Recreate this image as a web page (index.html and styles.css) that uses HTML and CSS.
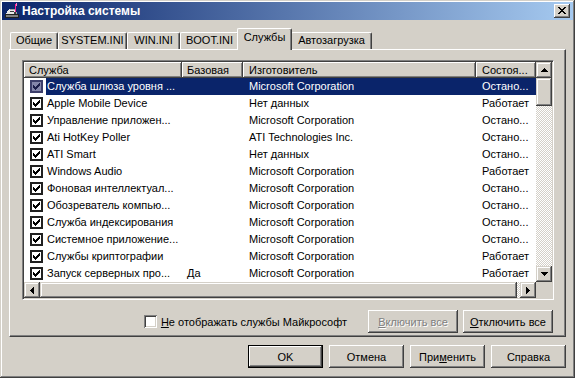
FILE: index.html
```html
<!DOCTYPE html>
<html lang="ru">
<head>
<meta charset="utf-8">
<title>Настройка системы</title>
<link rel="stylesheet" href="styles.css">
</head>
<body>
<div class="window">
  <div class="titlebar">
    <svg class="app-icon" width="16" height="16" viewBox="0 0 16 16" shape-rendering="crispEdges">
      <rect x="1" y="11" width="14" height="4" fill="#202020"/>
      <rect x="2" y="12" width="12" height="2" fill="#808080"/>
      <path d="M2 11 L5 6 H12 L13 11 Z" fill="#e8e8e8"/>
      <path d="M5 6 H12 L13 11 H12 L11 7 H6 Z" fill="#a0a0a0"/>
      <rect x="6" y="8" width="4" height="1" fill="#404040"/>
      <rect x="11" y="1" width="1" height="9" fill="#ff2090"/>
      <rect x="12" y="0" width="1" height="3" fill="#ff80c0"/>
      <rect x="10" y="9" width="2" height="2" fill="#404040"/>
    </svg>
    <span class="title">Настройка системы</span>
    <button class="close-btn" type="button" aria-label="Закрыть">
      <svg width="8" height="7" viewBox="0 0 8 7" shape-rendering="crispEdges"><path d="M0 0h2v1h1v1h2v-1h1v-1h2v1h-1v1h-1v1h-1v1h1v1h1v1h1v1h-2v-1h-1v-1h-2v1h-1v1h-2v-1h1v-1h1v-1h1v-1h-1v-1h-1v-1h-1z" fill="#000"/></svg>
    </button>
  </div>

  <div class="content">
    <div class="tabs">
      <div class="tab tab-general">Общие</div>
      <div class="tab tab-system">SYSTEM.INI</div>
      <div class="tab tab-win">WIN.INI</div>
      <div class="tab tab-boot">BOOT.INI</div>
      <div class="tab tab-services active">Службы</div>
      <div class="tab tab-startup">Автозагрузка</div>
    </div>

    <div class="panel">
      <div class="list">
        <div class="list-main">
          <div class="header">
            <div class="hcell c-name">Служба</div>
            <div class="hcell c-base">Базовая</div>
            <div class="hcell c-vendor">Изготовитель</div>
            <div class="hcell c-state">Состоя...</div>
          </div>
          <div class="rows">
            <div class="row selected"><span class="chk-cell"><span class="chk"><svg width="9" height="9" viewBox="0 0 9 9" shape-rendering="crispEdges"><path d="M1 3v3l2 2l5-5v-3l-5 5z"/></svg></span></span><span class="cell c-text">Служба шлюза уровня ...</span><span class="cell c-base"></span><span class="cell c-vendor">Microsoft Corporation</span><span class="cell c-state">Остано...</span></div>
            <div class="row"><span class="chk-cell"><span class="chk"><svg width="9" height="9" viewBox="0 0 9 9" shape-rendering="crispEdges"><path d="M1 3v3l2 2l5-5v-3l-5 5z"/></svg></span></span><span class="cell c-text">Apple Mobile Device</span><span class="cell c-base"></span><span class="cell c-vendor">Нет данных</span><span class="cell c-state">Работает</span></div>
            <div class="row"><span class="chk-cell"><span class="chk"><svg width="9" height="9" viewBox="0 0 9 9" shape-rendering="crispEdges"><path d="M1 3v3l2 2l5-5v-3l-5 5z"/></svg></span></span><span class="cell c-text">Управление приложен...</span><span class="cell c-base"></span><span class="cell c-vendor">Microsoft Corporation</span><span class="cell c-state">Остано...</span></div>
            <div class="row"><span class="chk-cell"><span class="chk"><svg width="9" height="9" viewBox="0 0 9 9" shape-rendering="crispEdges"><path d="M1 3v3l2 2l5-5v-3l-5 5z"/></svg></span></span><span class="cell c-text">Ati HotKey Poller</span><span class="cell c-base"></span><span class="cell c-vendor">ATI Technologies Inc.</span><span class="cell c-state">Остано...</span></div>
            <div class="row"><span class="chk-cell"><span class="chk"><svg width="9" height="9" viewBox="0 0 9 9" shape-rendering="crispEdges"><path d="M1 3v3l2 2l5-5v-3l-5 5z"/></svg></span></span><span class="cell c-text">ATI Smart</span><span class="cell c-base"></span><span class="cell c-vendor">Нет данных</span><span class="cell c-state">Остано...</span></div>
            <div class="row"><span class="chk-cell"><span class="chk"><svg width="9" height="9" viewBox="0 0 9 9" shape-rendering="crispEdges"><path d="M1 3v3l2 2l5-5v-3l-5 5z"/></svg></span></span><span class="cell c-text">Windows Audio</span><span class="cell c-base"></span><span class="cell c-vendor">Microsoft Corporation</span><span class="cell c-state">Работает</span></div>
            <div class="row"><span class="chk-cell"><span class="chk"><svg width="9" height="9" viewBox="0 0 9 9" shape-rendering="crispEdges"><path d="M1 3v3l2 2l5-5v-3l-5 5z"/></svg></span></span><span class="cell c-text">Фоновая интеллектуал...</span><span class="cell c-base"></span><span class="cell c-vendor">Microsoft Corporation</span><span class="cell c-state">Остано...</span></div>
            <div class="row"><span class="chk-cell"><span class="chk"><svg width="9" height="9" viewBox="0 0 9 9" shape-rendering="crispEdges"><path d="M1 3v3l2 2l5-5v-3l-5 5z"/></svg></span></span><span class="cell c-text">Обозреватель компью...</span><span class="cell c-base"></span><span class="cell c-vendor">Microsoft Corporation</span><span class="cell c-state">Остано...</span></div>
            <div class="row"><span class="chk-cell"><span class="chk"><svg width="9" height="9" viewBox="0 0 9 9" shape-rendering="crispEdges"><path d="M1 3v3l2 2l5-5v-3l-5 5z"/></svg></span></span><span class="cell c-text">Служба индексирования</span><span class="cell c-base"></span><span class="cell c-vendor">Microsoft Corporation</span><span class="cell c-state">Остано...</span></div>
            <div class="row"><span class="chk-cell"><span class="chk"><svg width="9" height="9" viewBox="0 0 9 9" shape-rendering="crispEdges"><path d="M1 3v3l2 2l5-5v-3l-5 5z"/></svg></span></span><span class="cell c-text">Системное приложение...</span><span class="cell c-base"></span><span class="cell c-vendor">Microsoft Corporation</span><span class="cell c-state">Остано...</span></div>
            <div class="row"><span class="chk-cell"><span class="chk"><svg width="9" height="9" viewBox="0 0 9 9" shape-rendering="crispEdges"><path d="M1 3v3l2 2l5-5v-3l-5 5z"/></svg></span></span><span class="cell c-text">Службы криптографии</span><span class="cell c-base"></span><span class="cell c-vendor">Microsoft Corporation</span><span class="cell c-state">Работает</span></div>
            <div class="row"><span class="chk-cell"><span class="chk"><svg width="9" height="9" viewBox="0 0 9 9" shape-rendering="crispEdges"><path d="M1 3v3l2 2l5-5v-3l-5 5z"/></svg></span></span><span class="cell c-text">Запуск серверных про...</span><span class="cell c-base">Да</span><span class="cell c-vendor">Microsoft Corporation</span><span class="cell c-state">Работает</span></div>
          </div>
        </div>
        <div class="vscroll">
          <div class="sb-btn"><svg width="7" height="4" viewBox="0 0 7 4" shape-rendering="crispEdges"><path d="M3 0h1v1h1v1h1v1h1v1H0V3h1V2h1V1h1z"/></svg></div>
          <div class="thumb thumb-v"></div>
          <div class="track"></div>
          <div class="sb-btn"><svg width="7" height="4" viewBox="0 0 7 4" shape-rendering="crispEdges"><path d="M0 0h7v1h-1v1h-1v1h-1v1h-1v-1h-1v-1h-1v-1h-1z"/></svg></div>
        </div>
        <div class="hscroll">
          <div class="sb-btn"><svg width="4" height="7" viewBox="0 0 4 7" shape-rendering="crispEdges"><path d="M3 0h1v7h-1v-1h-1v-1h-1v-1h-1v-1h1v-1h1v-1h1z"/></svg></div>
          <div class="thumb thumb-h"></div>
          <div class="track"></div>
          <div class="sb-btn"><svg width="4" height="7" viewBox="0 0 4 7" shape-rendering="crispEdges"><path d="M0 0h1v1h1v1h1v1h1v1h-1v1h-1v1h-1v1h-1z"/></svg></div>
        </div>
        <div class="corner"></div>
      </div>

      <div class="panel-actions">
        <label class="option"><span class="box"></span><span><u>Н</u>е отображать службы Майкрософт</span></label>
        <button class="btn btn-wide" type="button" disabled><u>В</u>ключить все</button>
        <button class="btn btn-wide" type="button"><u>О</u>тключить все</button>
      </div>
    </div>

    <div class="dialog-buttons">
      <button class="btn btn-dialog default" type="button">OK</button>
      <button class="btn btn-dialog" type="button">Отмена</button>
      <button class="btn btn-dialog" type="button">При<u>м</u>енить</button>
      <button class="btn btn-dialog" type="button">Справка</button>
    </div>
  </div>
</div>
</body>
</html>
```

FILE: styles.css
```css
* { box-sizing: border-box; }

html, body {
  margin: 0;
  padding: 0;
}

body {
  width: 575px;
  height: 378px;
  overflow: hidden;
  background: #d4d0c8;
  font-family: "Liberation Sans", Arial, sans-serif;
  font-size: 11px;
  color: #000;
}

.window {
  width: 575px;
  height: 378px;
  padding: 2px;
  background: #d4d0c8;
  box-shadow: inset -1px -1px #404040, inset 1px 1px #d4d0c8, inset -2px -2px #808080, inset 2px 2px #ffffff;
  display: flex;
  flex-direction: column;
}

/* Title bar */
.titlebar {
  height: 18px;
  flex: none;
  display: flex;
  align-items: center;
  padding: 0 3px 0 2px;
  background: linear-gradient(to right, #0a246a, #a6caf0);
}

.app-icon { flex: none; display: block; }

.title {
  flex: 1;
  margin-left: 2px;
  color: #fff;
  font-weight: bold;
  font-size: 12px;
  white-space: nowrap;
}

.close-btn {
  width: 16px;
  height: 14px;
  padding: 0;
  border: 0;
  background: #d4d0c8;
  display: flex;
  align-items: center;
  justify-content: center;
  box-shadow: inset -1px -1px #404040, inset 1px 1px #ffffff, inset -2px -2px #808080, inset 2px 2px #d4d0c8;
}
.close-btn svg { display: block; margin: 0 1px 1px 0; }

/* Content */
.content {
  flex: 1;
  display: flex;
  flex-direction: column;
  padding: 8px 7px 0 7px;
}

.tabs {
  height: 21px;
  flex: none;
  display: flex;
  align-items: flex-end;
  padding-left: 1px;
  position: relative;
  z-index: 1;
}

.tab {
  flex: none;
  height: 17px;
  line-height: 15px;
  text-align: center;
  white-space: nowrap;
  background: #d4d0c8;
  border-left: 1px solid #ffffff;
  border-top: 1px solid #ffffff;
  border-right: 1px solid #404040;
  border-radius: 2px 2px 0 0;
  box-shadow: inset -1px 0 #808080;
}

.tab-general { width: 48px; }
.tab-system { width: 69px; }
.tab-win { width: 53px; }
.tab-boot { width: 59px; }
.tab-services { width: 52px; }
.tab-startup { width: 81px; }

.tab.active {
  width: 55px;
  height: 22px;
  margin: 0 -1px -1px -2px;
  line-height: 17px;
  position: relative;
  z-index: 2;
}

.panel {
  flex: none;
  padding: 10px 11px 3px 12px;
  border-top: 1px solid #ffffff;
  border-left: 1px solid #ffffff;
  border-right: 1px solid #404040;
  border-bottom: 1px solid #404040;
  box-shadow: inset -1px -1px #808080;
}

/* List view */
.list {
  width: 532px;
  height: 240px;
  display: grid;
  grid-template-columns: 512px 16px;
  grid-template-rows: 220px 16px;
  background: #fff;
  border-top: 1px solid #808080;
  border-left: 1px solid #808080;
  border-right: 1px solid #ffffff;
  border-bottom: 1px solid #ffffff;
  box-shadow: inset 1px 1px #404040, inset -1px -1px #d4d0c8;
  padding: 1px;
}

.list-main { overflow: hidden; }

.header {
  display: flex;
  height: 16px;
}

.hcell {
  flex: none;
  height: 16px;
  line-height: 16px;
  padding: 0 5px;
  white-space: nowrap;
  overflow: hidden;
  background: #d4d0c8;
  box-shadow: inset -1px -1px #404040, inset 1px 1px #ffffff, inset -2px -2px #808080;
}

.hcell.c-name { width: 158px; }
.c-base { width: 61px; }
.c-vendor { width: 233px; }
.c-state { width: 60px; }
.hcell.c-vendor { padding-left: 6px; }
.hcell.c-state { padding-left: 6px; }

.row {
  display: flex;
  height: 17px;
  line-height: 17px;
}

.chk-cell {
  flex: none;
  width: 22px;
  display: flex;
  align-items: center;
  padding-left: 6px;
}

.chk {
  width: 13px;
  height: 13px;
  border: 2px solid #202020;
  background: #fff;
  display: flex;
  align-items: center;
  justify-content: center;
}
.chk svg { display: block; fill: #000; }

.cell {
  flex: none;
  height: 17px;
  padding: 0 6px;
  white-space: nowrap;
  overflow: hidden;
}
.cell.c-text { width: 136px; padding-left: 1px; }
.cell.c-base { padding-left: 5px; }

.row.selected .cell {
  background: #0a246a;
  color: #fff;
}
.row.selected .chk {
  background: #8486aa;
  border-color: #3c3e6a;
}
.row.selected .chk svg { fill: #1c1e4a; }

/* Scrollbars */
.vscroll {
  display: flex;
  flex-direction: column;
}

.hscroll {
  display: flex;
}

.sb-btn {
  flex: none;
  width: 16px;
  height: 16px;
  background: #d4d0c8;
  display: flex;
  align-items: center;
  justify-content: center;
  box-shadow: inset -1px -1px #404040, inset 1px 1px #d4d0c8, inset -2px -2px #808080, inset 2px 2px #ffffff;
}
.sb-btn svg { display: block; fill: #000; }

.thumb {
  flex: none;
  background: #d4d0c8;
  box-shadow: inset -1px -1px #404040, inset 1px 1px #d4d0c8, inset -2px -2px #808080, inset 2px 2px #ffffff;
}
.thumb-v { height: 28px; }
.thumb-h { width: 477px; }

.track {
  flex: 1;
  background: repeating-conic-gradient(#d4d0c8 0% 25%, #ffffff 0% 50%) 0 0 / 2px 2px;
}

.corner { background: #d4d0c8; }

/* Panel actions */
.panel-actions {
  margin-top: 10px;
  height: 23px;
  display: flex;
  align-items: center;
  justify-content: flex-end;
  padding-right: 1px;
  gap: 5px;
}

.option {
  display: flex;
  align-items: center;
  gap: 4px;
  margin-right: 16px;
  white-space: nowrap;
}

.box {
  width: 13px;
  height: 13px;
  background: #fff;
  box-shadow: inset 1px 1px #808080, inset -1px -1px #ffffff, inset 2px 2px #404040, inset -2px -2px #d4d0c8;
}

.btn {
  height: 23px;
  padding: 0;
  border: 0;
  font-family: inherit;
  font-size: 11px;
  color: #000;
  background: #d4d0c8;
  box-shadow: inset -1px -1px #404040, inset 1px 1px #ffffff, inset -2px -2px #808080, inset 2px 2px #d4d0c8;
}

.btn:disabled {
  color: #808080;
  text-shadow: 1px 1px 0 #ffffff;
}

.btn-wide { width: 90px; }

.dialog-buttons {
  margin-top: 8px;
  display: flex;
  justify-content: flex-end;
  gap: 6px;
}

.btn-dialog { width: 75px; }

.btn.default {
  border: 1px solid #000;
}
```
